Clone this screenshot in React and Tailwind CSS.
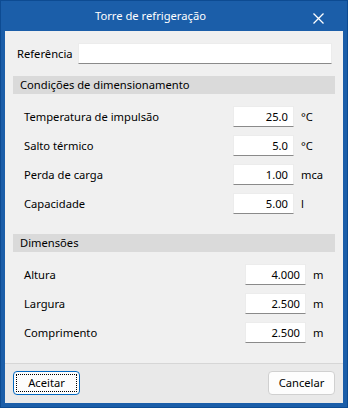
import React from "react";

const font = { fontFamily: '"Noto Sans", "Liberation Sans", sans-serif' };

function Field({ label, value, unit, unitW }) {
  return (
    <div className="flex items-center h-[21px] pl-[11px]">
      <span className="flex-1 text-black leading-none">{label}</span>
      <div className="w-[61px] h-[21px] bg-white border border-[#ececec] border-b-[#8a8a8a] flex items-center justify-end pr-[5px] text-black leading-none">
        {value}
      </div>
      <span className={`ml-[7px] text-black leading-none ${unitW}`}>{unit}</span>
    </div>
  );
}

export default function App() {
  return (
    <div className="w-[348px] h-[408px] bg-[#1b5ea9] border border-[#0d4b92] flex flex-col text-[11.2px]" style={font}>
      <div className="relative h-[30px] flex items-center justify-center pr-[47px] text-white">
        <span>Torre de refrigeração</span>
        <svg className="absolute left-[312px] top-[12px]" width="11" height="11" viewBox="0 0 11 11">
          <path d="M0.5 0.5 L10.5 10.5 M10.5 0.5 L0.5 10.5" stroke="white" strokeWidth="1.3" fill="none" />
        </svg>
      </div>
      <div className="mx-[4px] mb-[4px] flex-1 bg-[#f0f0f0] flex flex-col">
        <div className="flex items-center h-[21px] mt-[12px] pl-[12px] pr-[11px]">
          <span className="w-[61px] leading-none">Referência</span>
          <div className="flex-1 h-[21px] bg-white border border-[#ececec] border-b-[#8a8a8a]" />
        </div>

        <div className="mx-[8px] mt-[12px] h-[18px] bg-[#dadada] pl-[7px] flex items-center leading-none">
          Condições de dimensionamento
        </div>
        <div className="mx-[8px] mt-[12px] flex flex-col gap-[8px]">
          <Field label="Temperatura de impulsão" value="25.0" unit="°C" unitW="w-[34px]" />
          <Field label="Salto térmico" value="5.0" unit="°C" unitW="w-[34px]" />
          <Field label="Perda de carga" value="1.00" unit="mca" unitW="w-[34px]" />
          <Field label="Capacidade" value="5.00" unit="l" unitW="w-[34px]" />
        </div>

        <div className="mx-[8px] mt-[20px] h-[18px] bg-[#dadada] pl-[7px] flex items-center leading-none">
          Dimensões
        </div>
        <div className="mx-[8px] mt-[12px] flex flex-col gap-[8px]">
          <Field label="Altura" value="4.000" unit="m" unitW="w-[22px]" />
          <Field label="Largura" value="2.500" unit="m" unitW="w-[22px]" />
          <Field label="Comprimento" value="2.500" unit="m" unitW="w-[22px]" />
        </div>

        <div className="flex-1" />
        <div className="h-[40px] border-t border-[#d6d6d6] bg-[#e9e9e9] flex items-start justify-between px-[8px] pt-[7px]">
          <button className="w-[67px] h-[24px] rounded-[4px] border border-[#0067c0] bg-[#fdfdfd] p-[2px]">
            <div className="w-full h-full border border-dotted border-black flex items-center justify-center leading-none text-black">
              Aceitar
            </div>
          </button>
          <button className="w-[67px] h-[24px] rounded-[4px] border border-[#d0d0d0] bg-[#fdfdfd] flex items-center justify-center leading-none text-black">
            Cancelar
          </button>
        </div>
      </div>
    </div>
  );
}
